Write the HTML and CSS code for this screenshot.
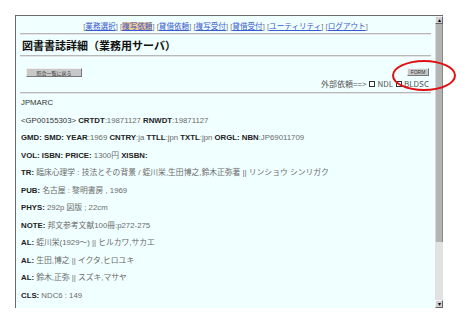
FILE: index.html
```html
<!DOCTYPE html>
<html lang="ja">
<head>
    <meta charset="UTF-8">
    <title>図書書誌詳細（業務用サーバ）</title>
    <link rel="stylesheet" href="styles.css">
</head>
<body>
    <div class="window">
        <div class="page">
            <div class="menu">
                <span class="br">[</span><a href="#">業務選択</a><span class="br">]</span>
                <span class="br">[</span><a href="#" class="current">複写依頼</a><span class="br">]</span>
                <span class="br">[</span><a href="#">貸借依頼</a><span class="br">]</span>
                <span class="br">[</span><a href="#">複写受付</a><span class="br">]</span>
                <span class="br">[</span><a href="#">貸借受付</a><span class="br">]</span>
                <span class="br">[</span><a href="#">ユーティリティ</a><span class="br">]</span>
                <span class="br">[</span><a href="#">ログアウト</a><span class="br">]</span>
            </div>
            <hr>
            <h1>図書書誌詳細（業務用サーバ）</h1>
            <hr>
            <div class="tools">
                <button class="small-btn back">照会一覧に戻る</button>
                <div class="ext">
                    <button class="small-btn form">FORM</button>
                    <div class="ext-line">外部依頼==&gt;<span class="box"></span>NDL<span class="box"></span>BLDSC</div>
                </div>
            </div>
            <hr>
            <div class="rec">
                <div class="row dark">JPMARC</div>
                <div class="row"><span class="dark">&lt;GP00155303&gt;</span> <b>CRTDT</b>:19871127 <b>RNWDT</b>:19871127</div>
                <div class="row"><b>GMD:</b> <b>SMD:</b> <b>YEAR</b>:1969 <b>CNTRY</b>:ja <b>TTLL</b>:jpn <b>TXTL</b>:jpn <b>ORGL:</b> <b>NBN</b>:JP69011709</div>
                <div class="row"><b>VOL:</b> <b>ISBN:</b> <b>PRICE:</b> 1300円 <b>XISBN:</b></div>
                <div class="row"><b>TR:</b> 臨床心理学 : 技法とその背景 / 蛭川栄,生田博之,鈴木正弥著 || リンショウ シンリガク</div>
                <div class="row"><b>PUB:</b> 名古屋 : 黎明書房 , 1969</div>
                <div class="row"><b>PHYS:</b> 292p 図版 ; 22cm</div>
                <div class="row"><b>NOTE:</b> 邦文参考文献100冊:p272-275</div>
                <div class="row"><b>AL:</b> 蛭川栄(1929～) || ヒルカワ,サカエ</div>
                <div class="row"><b>AL:</b> 生田,博之 || イクタ,ヒロユキ</div>
                <div class="row"><b>AL:</b> 鈴木,正弥 || スズキ,マサヤ</div>
                <div class="row"><b>CLS:</b> NDC6 : 149</div>
            </div>
        </div>
        <div class="scrollbar">
            <div class="arrow">&#9652;</div>
            <div class="thumb"></div>
            <div class="track"></div>
            <div class="arrow">&#9662;</div>
        </div>
    </div>
    <div class="mark"></div>
</body>
</html>
```

FILE: styles.css
```css
body {
    margin: 0;
    background: #ffffff;
    font-family: "Liberation Sans", "Noto Sans CJK JP", sans-serif;
    color: #555;
    position: relative;
}

.window {
    margin: 15px 0 0 15px;
    width: 427px;
    height: 292px;
    display: flex;
    border-top: 1px solid #6a6a6a;
    border-left: 1px solid #6a6a6a;
    background: #f0ffff;
}

.page {
    flex: 1;
    padding: 0 4px 0 4px;
    overflow: hidden;
}

.menu {
    text-align: center;
    font-size: 7.6px;
    margin-top: 5px;
    height: 12px;
    line-height: 12px;
    white-space: nowrap;
}

.menu a {
    color: #3a5ad0;
    text-decoration: underline;
}

.menu a.current {
    background: #f0c890;
    color: #3a5ad0;
}

.br {
    color: #777;
}

hr {
    border: 0;
    border-top: 1px solid #b8b8b8;
    border-bottom: 1px solid #e4e4e4;
    margin: 0;
}

h1 {
    font-family: "Noto Sans CJK JP", sans-serif;
    font-size: 11px;
    font-weight: bold;
    color: #111;
    margin: 0;
    height: 20px;
    line-height: 20px;
    padding-left: 2px;
}

.tools {
    display: flex;
    justify-content: space-between;
    align-items: flex-start;
    height: 35px;
    padding: 0 2px 0 6px;
}

.small-btn {
    font-family: "Noto Sans CJK JP", sans-serif;
    font-size: 5px;
    line-height: 7px;
    height: 9px;
    padding: 0 4px;
    background: #c8c8c8;
    color: #333;
    border: 1px solid;
    border-color: #f0f0f0 #777 #777 #f0f0f0;
    margin: 0;
}

.back {
    width: 56px;
    margin-top: 11px;
}

.form {
    width: 22px;
    padding: 0;
    margin-top: 11px;
    height: 8px;
    line-height: 6px;
    font-family: "Liberation Sans", sans-serif;
}

.ext {
    display: flex;
    flex-direction: column;
    align-items: flex-end;
}

.ext-line {
    font-family: "Noto Sans CJK JP", sans-serif;
    font-size: 8px;
    line-height: 10px;
    margin-top: 3px;
    color: #555;
}

.box {
    display: inline-block;
    width: 4px;
    height: 4px;
    border: 1px solid #333;
    background: #fff;
    margin: 0 2px 0 3px;
}

.rec {
    padding-top: 1px;
}

.row {
    font-size: 7.8px;
    height: 17.55px;
    line-height: 16px;
    white-space: nowrap;
    color: #6a6a6a;
    padding-left: 1px;
}

.row b {
    color: #222;
    font-weight: bold;
}

.dark {
    color: #333;
}

.scrollbar {
    width: 8px;
    display: flex;
    flex-direction: column;
    background: #dcdcdc;
}

.arrow {
    height: 6px;
    font-size: 6px;
    line-height: 6px;
    text-align: center;
    background: #d0d0d0;
    border: 1px solid;
    border-color: #f4f4f4 #666 #666 #f4f4f4;
    color: #000;
}

.thumb {
    height: 218px;
    background: #b4b4b4;
    border-left: 1px solid #d8d8d8;
    border-right: 1px solid #888;
}

.track {
    flex: 1;
    background: #e2e2e2;
}

.mark {
    position: absolute;
    left: 392px;
    top: 60px;
    width: 60px;
    height: 27px;
    border: 2px solid #e01010;
    border-radius: 50%;
}
```
